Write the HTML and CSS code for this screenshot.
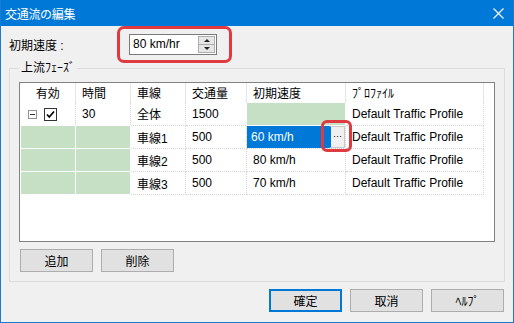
FILE: index.html
```html
<!DOCTYPE html>
<html>
<head>
    <title>交通流の編集</title>
    <link rel="stylesheet" href="styles.css">
</head>
<body>
    <div class="window">
        <div class="titlebar">
            <span class="title">交通流の編集</span>
            <svg class="close" width="11" height="11" viewBox="0 0 11 11">
                <path d="M0.5 0.5L10.5 10.5M10.5 0.5L0.5 10.5" stroke="#fff" stroke-width="1.1" fill="none"/>
            </svg>
        </div>

        <div class="speed-row">
            <span class="speed-label">初期速度 :</span>
            <div class="mark">
                <div class="spin">
                    <span>80 km/hr</span>
                    <span class="spin-btns">
                        <span class="spin-up"><i class="arrow-up"></i></span>
                        <span class="spin-down"><i class="arrow-down"></i></span>
                    </span>
                </div>
            </div>
        </div>

        <fieldset class="group">
            <legend>上流ﾌｪｰｽﾞ</legend>
            <div class="grid-box">
                <table class="grid">
                    <colgroup>
                        <col style="width:55px">
                        <col style="width:55px">
                        <col style="width:55px">
                        <col style="width:61px">
                        <col style="width:99px">
                        <col style="width:138px">
                    </colgroup>
                    <tr>
                        <th class="center">有効</th>
                        <th>時間</th>
                        <th>車線</th>
                        <th>交通量</th>
                        <th>初期速度</th>
                        <th>ﾌﾟﾛﾌｧｲﾙ</th>
                    </tr>
                    <tr>
                        <td class="first">
                            <span class="expander"><i></i></span>
                            <span class="checkbox">
                                <svg width="11" height="11" viewBox="0 0 11 11">
                                    <path d="M2 5.5L4.3 8L9 2.5" stroke="#000" stroke-width="1.7" fill="none"/>
                                </svg>
                            </span>
                        </td>
                        <td>30</td>
                        <td>全体</td>
                        <td>1500</td>
                        <td class="green"></td>
                        <td>Default Traffic Profile</td>
                    </tr>
                    <tr>
                        <td class="green"></td>
                        <td class="green"></td>
                        <td>車線1</td>
                        <td>500</td>
                        <td class="edit">
                            <div class="edit-wrap">
                                <span class="selected">60 km/h</span>
                                <span class="ellipsis">···</span>
                                <span class="mark-cell"></span>
                            </div>
                        </td>
                        <td>Default Traffic Profile</td>
                    </tr>
                    <tr>
                        <td class="green"></td>
                        <td class="green"></td>
                        <td>車線2</td>
                        <td>500</td>
                        <td>80 km/h</td>
                        <td>Default Traffic Profile</td>
                    </tr>
                    <tr>
                        <td class="green"></td>
                        <td class="green"></td>
                        <td>車線3</td>
                        <td>500</td>
                        <td>70 km/h</td>
                        <td>Default Traffic Profile</td>
                    </tr>
                </table>
            </div>
            <div class="row-btns">
                <button>追加</button>
                <button>削除</button>
            </div>
        </fieldset>

        <div class="dlg-btns">
            <button class="default">確定</button>
            <button>取消</button>
            <button>ﾍﾙﾌﾟ</button>
        </div>
    </div>
</body>
</html>
```

FILE: styles.css
```css
body {
    margin: 0;
    font-family: "Liberation Sans", "Noto Sans CJK JP", sans-serif;
    font-size: 12px;
    color: #000;
}
.window {
    width: 514px;
    height: 323px;
    box-sizing: border-box;
    border: 1px solid #1a7bcf;
    border-top: 0;
    background-color: #f0f0f0;
}
.titlebar {
    height: 26px;
    background-color: #0078d7;
    color: #fff;
    display: flex;
    align-items: center;
    justify-content: space-between;
    padding: 0 9px 0 4px;
}
.title {
    font-size: 12px;
    letter-spacing: -0.3px;
}
.close {
    margin-top: 1px;
}
.speed-row {
    display: flex;
    align-items: center;
    height: 36px;
    padding-left: 8px;
}
.speed-label {
    width: 108px;
}
.mark {
    border: 3px solid #de3a40;
    border-radius: 7px;
    padding: 5px 12px 5px 9px;
}
.spin {
    width: 88px;
    height: 21px;
    box-sizing: border-box;
    background: #fff;
    border: 1px solid #7a7a7a;
    display: flex;
    align-items: center;
    justify-content: space-between;
    padding-left: 3px;
}
.spin-btns {
    width: 15px;
    height: 15px;
    margin-right: 1px;
    display: flex;
    flex-direction: column;
    border: 1px solid #adadad;
    background: #e6e6e6;
}
.spin-up,
.spin-down {
    flex: 1;
    display: flex;
    align-items: center;
    justify-content: center;
}
.spin-up {
    border-bottom: 1px solid #adadad;
}
.arrow-up {
    border-left: 3px solid transparent;
    border-right: 3px solid transparent;
    border-bottom: 3px solid #222;
}
.arrow-down {
    border-left: 3px solid transparent;
    border-right: 3px solid transparent;
    border-top: 3px solid #222;
}
.group {
    margin: -1px 8px 0;
    padding: 0 9px 9px;
    border: 1px solid #dcdcdc;
    min-width: 0;
}
.group legend {
    padding: 0 2px;
    line-height: 14px;
}
.grid-box {
    margin-top: 7px;
    height: 160px;
    box-sizing: border-box;
    border: 1px solid #828282;
    background: #fff;
}
.grid {
    border-collapse: collapse;
    table-layout: fixed;
    width: 463px;
}
.grid th {
    height: 19px;
    font-weight: normal;
    text-align: left;
    padding: 0 0 0 6px;
    border-right: 1px solid #e5e5e5;
}
.grid th.center {
    text-align: center;
    padding: 0;
}
.grid td {
    height: 22px;
    padding: 0 0 0 6px;
    white-space: nowrap;
    border-right: 1px dotted #d4d4d4;
    border-bottom: 1px dotted #d4d4d4;
}
.grid td.green {
    background: #c6e0c6;
    border: 1px solid #fff;
}
.grid td.first {
    padding-left: 7px;
}
.expander {
    display: inline-flex;
    align-items: center;
    justify-content: center;
    width: 9px;
    height: 9px;
    box-sizing: border-box;
    border: 1px solid #919191;
    vertical-align: middle;
    margin-right: 4px;
}
.expander i {
    width: 5px;
    height: 1px;
    background: #333;
}
.checkbox {
    display: inline-flex;
    align-items: center;
    justify-content: center;
    width: 13px;
    height: 13px;
    box-sizing: border-box;
    border: 1px solid #333;
    background: #fff;
    vertical-align: middle;
}
.grid td.edit {
    padding: 0;
}
.edit-wrap {
    position: relative;
    display: flex;
    height: 22px;
}
.selected {
    flex: 1;
    background: #0078d7;
    color: #fff;
    padding-left: 4px;
    line-height: 22px;
}
.ellipsis {
    width: 16px;
    box-sizing: border-box;
    background: #f0f0f0;
    border: 1px solid #c8c8c8;
    border-left: 2px solid #0078d7;
    font-size: 9px;
    text-align: center;
    line-height: 18px;
}
.mark-cell {
    position: absolute;
    left: 74px;
    top: -6px;
    width: 31px;
    height: 32px;
    box-sizing: border-box;
    border: 3px solid #de3a40;
    border-radius: 6px;
    z-index: 1;
}
button {
    width: 73px;
    height: 23px;
    padding: 0;
    font-family: "Liberation Sans", "Noto Sans CJK JP", sans-serif;
    font-size: 12px;
    color: #000;
    background-color: #e1e1e1;
    border: 1px solid #adadad;
}
button.default {
    border: 2px solid #0078d7;
}
.row-btns {
    display: flex;
    gap: 8px;
    margin-top: 7px;
    padding-left: 1px;
}
.dlg-btns {
    display: flex;
    justify-content: flex-end;
    gap: 8px;
    margin-top: 7px;
    padding-right: 9px;
}
```
